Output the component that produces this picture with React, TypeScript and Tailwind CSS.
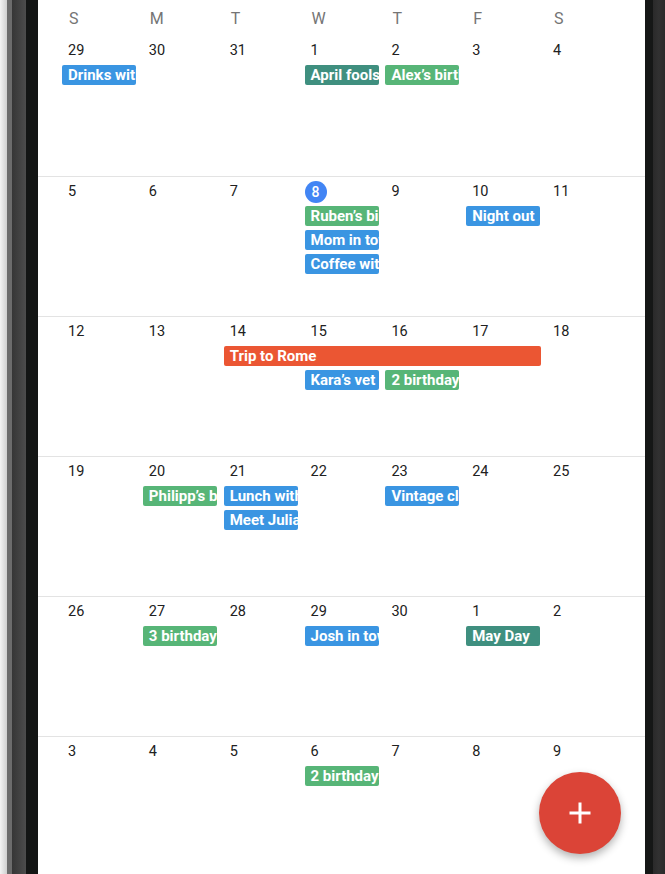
import React from "react";

type Ev = { c: number; r?: number; span?: number; t: string; k: "blue" | "teal" | "green" | "orange" };
type Week = { days: number[]; today?: number; events: Ev[] };

const colorClass: Record<Ev["k"], string> = {
  blue: "bg-[#3a95e2]",
  teal: "bg-[#3f8f7f]",
  green: "bg-[#57b577]",
  orange: "bg-[#eb5633]",
};

const weeks: Week[] = [
  {
    days: [29, 30, 31, 1, 2, 3, 4],
    events: [
      { c: 0, t: "Drinks with", k: "blue" },
      { c: 3, t: "April fools", k: "teal" },
      { c: 4, t: "Alex’s birthday", k: "green" },
    ],
  },
  {
    days: [5, 6, 7, 8, 9, 10, 11],
    today: 3,
    events: [
      { c: 3, t: "Ruben’s birthday", k: "green" },
      { c: 3, r: 1, t: "Mom in town", k: "blue" },
      { c: 3, r: 2, t: "Coffee with", k: "blue" },
      { c: 5, t: "Night out", k: "blue" },
    ],
  },
  {
    days: [12, 13, 14, 15, 16, 17, 18],
    events: [
      { c: 2, span: 4, t: "Trip to Rome", k: "orange" },
      { c: 3, r: 1, t: "Kara’s vet", k: "blue" },
      { c: 4, r: 1, t: "2 birthdays", k: "green" },
    ],
  },
  {
    days: [19, 20, 21, 22, 23, 24, 25],
    events: [
      { c: 1, t: "Philipp’s birthday", k: "green" },
      { c: 2, t: "Lunch with", k: "blue" },
      { c: 2, r: 1, t: "Meet Julia", k: "blue" },
      { c: 4, t: "Vintage clothes", k: "blue" },
    ],
  },
  {
    days: [26, 27, 28, 29, 30, 1, 2],
    events: [
      { c: 1, t: "3 birthdays", k: "green" },
      { c: 3, t: "Josh in town", k: "blue" },
      { c: 5, t: "May Day", k: "teal" },
    ],
  },
  {
    days: [3, 4, 5, 6, 7, 8, 9],
    events: [{ c: 3, t: "2 birthdays", k: "green" }],
  },
];

const heads = ["S", "M", "T", "W", "T", "F", "S"];

export default function App() {
  return (
    <div
      className="flex h-[874px] w-[665px] overflow-hidden bg-white"
      style={{ fontFamily: "Roboto, 'Liberation Sans', sans-serif" }}
    >
      {/* left bezel */}
      <div className="flex h-full w-[38px] shrink-0">
        <div className="h-full w-[7px] bg-gradient-to-r from-[#f4f4f4] to-[#cfcfcf]" />
        <div className="h-full w-[5px] bg-[#6c6c6c]" />
        <div className="h-full w-[14px] bg-gradient-to-r from-[#363636] to-[#4c4c4c]" />
        <div className="h-full w-[12px] bg-[#131514]" />
      </div>

      {/* screen */}
      <div className="relative h-full w-[607px] shrink-0 bg-white">
        <div className="grid h-[36px] grid-cols-[repeat(7,80.85px)] pl-[24px]">
          {heads.map((h, i) => (
            <div key={i} className="pl-[7px] pt-[9px] text-[16px] leading-[20px] text-[#757575]">
              {h}
            </div>
          ))}
        </div>

        {weeks.map((w, wi) => (
          <div
            key={wi}
            className={`h-[140px] ${wi > 0 ? "border-t border-[#e3e3e3]" : ""}`}
          >
            <div className="grid grid-cols-[repeat(7,80.85px)] grid-rows-[20px_20px_20px_20px] gap-y-[4px] pl-[24px] pt-[5px]">
              {w.days.map((d, di) =>
                w.today === di ? (
                  <div key={di} className="flex items-center" style={{ gridColumn: di + 1, gridRow: 1 }}>
                    <span className="flex h-[22px] w-[22px] items-center justify-center rounded-full bg-[#4285f4] text-[14px] font-medium text-white">
                      {d}
                    </span>
                  </div>
                ) : (
                  <div
                    key={di}
                    className="pl-[6px] text-[14.5px] leading-[20px] text-[#212121]"
                    style={{ gridColumn: di + 1, gridRow: 1 }}
                  >
                    {d}
                  </div>
                )
              )}
              {w.events.map((e, ei) => (
                <div
                  key={ei}
                  className={`${colorClass[e.k]} overflow-hidden whitespace-nowrap rounded-[2px] pl-[6px] text-[15px] font-bold leading-[20px] text-white`}
                  style={{
                    gridColumn: `${e.c + 1} / span ${e.span ?? 1}`,
                    gridRow: (e.r ?? 0) + 2,
                    width: `${74 + ((e.span ?? 1) - 1) * 81}px`,
                  }}
                >
                  {e.t}
                </div>
              ))}
            </div>
          </div>
        ))}

        {/* FAB */}
        <button className="absolute left-[501px] top-[772px] flex h-[82px] w-[82px] items-center justify-center rounded-full bg-[#db4437] shadow-[0_4px_8px_rgba(0,0,0,0.3)]">
          <svg width="24" height="24" viewBox="0 0 24 24">
            <path d="M12 1.5v21M1.5 12h21" stroke="white" strokeWidth="3" />
          </svg>
        </button>
      </div>

      {/* right bezel */}
      <div className="flex h-full w-[20px] shrink-0">
        <div className="h-full w-[8px] bg-[#151716]" />
        <div className="h-full w-[12px] bg-gradient-to-r from-[#2a2a2a] via-[#313131] to-[#2a2a2a]" />
      </div>
    </div>
  );
}
